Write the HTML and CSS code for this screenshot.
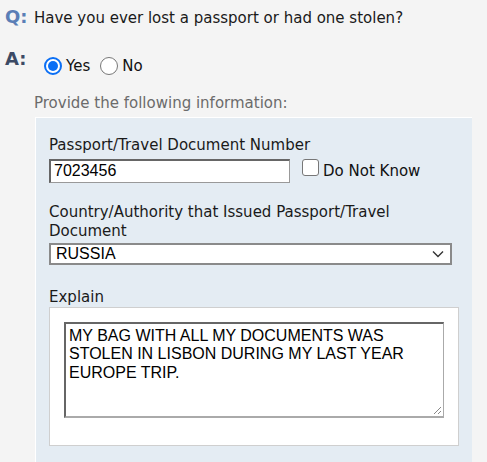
FILE: index.html
```html
<!DOCTYPE html>
<html>
<head>
<meta charset="utf-8">
<link rel="stylesheet" href="styles.css">
</head>
<body>
<div class="qa">
  <div class="q-row">
    <span class="q-label">Q:</span>
    <span class="q-text">Have you ever lost a passport or had one stolen?</span>
  </div>
  <div class="a-row">
    <span class="a-label">A:</span>
    <label class="opt"><span class="radio checked"></span>Yes</label>
    <label class="opt"><span class="radio"></span>No</label>
  </div>
  <div class="provide">Provide the following information:</div>
  <div class="panel">
    <div class="field">
      <div class="label">Passport/Travel Document Number</div>
      <div class="row">
        <div class="text-input">7023456</div>
        <label class="check-opt"><span class="checkbox"></span><span class="check-text">Do Not Know</span></label>
      </div>
    </div>
    <div class="field">
      <div class="label wrap">Country/Authority that Issued Passport/Travel Document</div>
      <div class="select">
        <span>RUSSIA</span>
        <svg class="chev" width="12" height="8" viewBox="0 0 12 8"><path d="M1 1.5 L6 6.5 L11 1.5" fill="none" stroke="#333" stroke-width="1.4"/></svg>
      </div>
    </div>
    <div class="field explain-field">
      <div class="label">Explain</div>
      <div class="explain-box">
        <div class="textarea">MY BAG WITH ALL MY DOCUMENTS WAS STOLEN IN LISBON DURING MY LAST YEAR EUROPE TRIP.
          <svg class="grip" width="10" height="10" viewBox="0 0 10 10"><path d="M9 2 L2 9 M9 6 L6 9" stroke="#888" stroke-width="1"/></svg>
        </div>
      </div>
    </div>
  </div>
</div>
</body>
</html>
```
FILE: styles.css
```css
html, body {
  margin: 0;
  padding: 0;
  background: #f4f4f4;
  height: 100%;
}
body {
  font-family: "DejaVu Sans", Verdana, sans-serif;
  font-size: 15px;
  color: #222;
}
.qa {
  padding: 6px 0 0 5px;
  display: flex;
  flex-direction: column;
  height: 100%;
  box-sizing: border-box;
}
.q-row {
  display: flex;
  align-items: baseline;
  height: 21px;
}
.q-label {
  font-weight: bold;
  font-size: 18px;
  line-height: 21px;
  color: #5a7eb6;
  width: 29px;
}
.q-text {
  font-size: 15px;
  color: #1a1a1a;
}
.a-row {
  display: flex;
  align-items: flex-start;
  margin-top: 21px;
}
.a-label {
  font-weight: bold;
  font-size: 18px;
  line-height: 21px;
  color: #3c4a65;
  width: 39px;
}
.opt {
  display: flex;
  align-items: center;
  gap: 4px;
  margin-right: 10px;
  font-size: 15px;
  margin-top: 9px;
  color: #111;
}
.radio {
  width: 18px;
  height: 18px;
  border: 1.5px solid #777;
  border-radius: 50%;
  background: #fff;
  box-sizing: border-box;
  position: relative;
}
.radio.checked {
  border: 2px solid #0b6ff5;
}
.radio.checked::after {
  content: "";
  position: absolute;
  left: 2px;
  top: 2px;
  width: 10px;
  height: 10px;
  border-radius: 50%;
  background: #0b6ff5;
}
.provide {
  margin: 19px 0 0 29px;
  color: #6b6b6b;
  font-size: 15px;
  line-height: 18px;
}
.panel {
  margin: 5px 0 0 30px;
  width: 437px;
  flex: 1;
  background: #e4ecf3;
  border-top: 1px solid #fff;
  border-left: 1px solid #fff;
  padding: 18px 0 0 13px;
  box-sizing: border-box;
}
.field {
  margin-bottom: 20px;
}
.explain-field {
  padding-top: 3px;
}
.label {
  font-size: 15px;
  color: #1a1a1a;
  line-height: 19px;
}
.label.wrap {
  width: 420px;
}
.row {
  display: flex;
  align-items: flex-start;
  margin-top: 4px;
}
.text-input {
  width: 241px;
  height: 24px;
  box-sizing: border-box;
  background: #fff;
  border: 1px solid #999;
  border-top: 2px solid #666;
  border-left: 2px solid #666;
  font-family: "Liberation Sans", Arial, sans-serif;
  font-size: 16px;
  line-height: 20px;
  padding-left: 3px;
  color: #000;
}
.check-opt {
  display: flex;
  align-items: flex-start;
  margin-left: 12px;
  gap: 4px;
  font-size: 15px;
  color: #111;
}
.checkbox {
  width: 17px;
  height: 17px;
  box-sizing: border-box;
  border: 1px solid #777;
  border-radius: 3px;
  background: #fff;
}
.check-text {
  padding-top: 4px;
  line-height: 17px;
}
.select {
  margin-top: 2px;
  width: 403px;
  height: 22px;
  box-sizing: border-box;
  background: #fff;
  border: 2px solid #8a8a8a;
  display: flex;
  align-items: center;
  justify-content: space-between;
  padding: 0 6px 0 5px;
  font-family: "Liberation Sans", Arial, sans-serif;
  font-size: 16px;
  color: #000;
}
.explain-box {
  width: 410px;
  height: 139px;
  box-sizing: border-box;
  background: #fff;
  border: 1px solid #cfcfcf;
  padding: 14px 0 0 14px;
}
.textarea {
  position: relative;
  width: 380px;
  height: 96px;
  box-sizing: border-box;
  border: 2px solid #666;
  border-right: 1px solid #aaa;
  border-bottom: 2px solid #aaa;
  padding: 3px 4px 0 3px;
  font-family: "Liberation Sans", Arial, sans-serif;
  font-size: 16px;
  line-height: 18.4px;
  color: #000;
}
.grip {
  position: absolute;
  right: 1px;
  bottom: 1px;
}
```
